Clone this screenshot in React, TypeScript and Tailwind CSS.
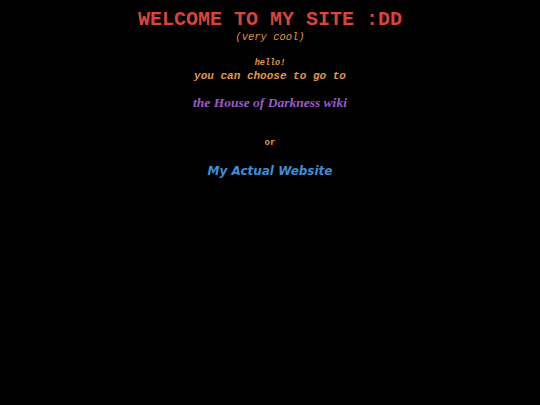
const mono = "font-['Courier_New','Nimbus_Mono_PS','FreeMono','Liberation_Mono',monospace]";

export default function App() {
  return (
    <div className="min-h-[405px] w-full bg-black text-center">
      <h1 className={`pt-[9px] ${mono} text-[20px] font-bold leading-[22px] text-[#dc4438]`}>
        WELCOME TO MY SITE :DD
      </h1>
      <p className={`-mt-[1px] ${mono} text-[10.5px] italic leading-[14px] text-[#e29a36]`}>
        (very cool)
      </p>
      <p className={`mt-[14px] ${mono} text-[8.5px] font-bold italic leading-[10px] text-[#e29a36]`}>
        hello!
      </p>
      <p className={`mt-[2px] ${mono} text-[11px] font-bold italic leading-[13px] text-[#e29a36]`}>
        you can choose to go to
      </p>
      <p className="mt-[12px] font-['Liberation_Serif',serif] text-[13.5px] font-bold italic leading-[16px] text-[#9c5bc8]">
        the House of Darkness wiki
      </p>
      <p className={`mt-[27px] ${mono} text-[9px] font-bold leading-[10px] text-[#e29a36]`}>
        or
      </p>
      <p className="mt-[15px] font-['Comic_Sans_MS','DejaVu_Sans',sans-serif] text-[12px] font-bold italic leading-[16px] text-[#3d8fd8]">
        My Actual Website
      </p>
    </div>
  );
}
